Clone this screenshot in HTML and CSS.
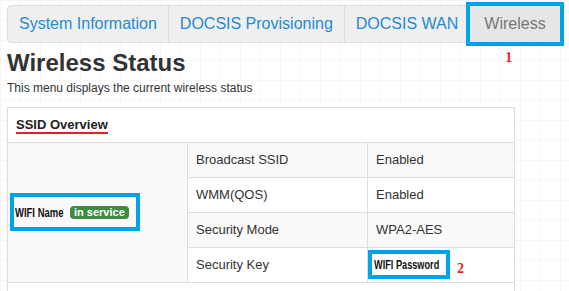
FILE: index.html
```html
<!DOCTYPE html>
<html>
<head>
<meta charset="utf-8">
<link rel="stylesheet" href="styles.css">
</head>
<body>
<nav class="tabs">
  <a class="tab">System Information</a>
  <a class="tab">DOCSIS Provisioning</a>
  <a class="tab">DOCSIS WAN</a>
  <a class="tab active">Wireless<span class="mark-box"></span><span class="mark-num one">1</span></a>
</nav>
<h1 class="title">Wireless Status</h1>
<p class="subtitle">This menu displays the current wireless status</p>
<table class="status">
  <colgroup>
    <col class="c1">
    <col class="c2">
    <col class="c3">
  </colgroup>
  <tr class="head">
    <td colspan="3"><span class="head-text">SSID Overview</span></td>
  </tr>
  <tr class="odd">
    <td rowspan="4" class="name-cell"><span class="name"><span class="narrow n-name"><span class="squeeze">WIFI Name</span></span><span class="badge">in service</span><span class="mark-box name-box"></span></span></td>
    <td>Broadcast SSID</td>
    <td>Enabled</td>
  </tr>
  <tr>
    <td>WMM(QOS)</td>
    <td>Enabled</td>
  </tr>
  <tr class="odd">
    <td>Security Mode</td>
    <td>WPA2-AES</td>
  </tr>
  <tr>
    <td>Security Key</td>
    <td class="key-cell"><span class="pass"><span class="narrow n-pass"><span class="squeeze">WIFI Password</span></span><span class="mark-box pass-box"></span><span class="mark-num two">2</span></span></td>
  </tr>
  <tr class="tail">
    <td colspan="3"></td>
  </tr>
</table>
</body>
</html>
```
FILE: styles.css
```css
html, body {
  margin: 0;
  padding: 0;
}
body {
  padding: 5px 7px 0;
  font-family: "Liberation Sans", Arial, sans-serif;
  color: #333;
  background-color: #fff;
  background-image:
    linear-gradient(to right, #f6f6f6 1px, transparent 1px),
    linear-gradient(to bottom, #f6f6f6 1px, transparent 1px);
  background-size: 20px 20px;
  overflow: hidden;
}
.tabs {
  display: flex;
  width: 552px;
  height: 36px;
  border: 1px solid #ddd;
  border-radius: 4px;
  background: #efefef;
}
.tab {
  display: flex;
  align-items: center;
  padding: 0 11px;
  font-size: 16px;
  color: #1f8ad6;
  border-right: 1px solid #dcdcdc;
  position: relative;
}
.tab.active {
  padding: 0 14px;
  color: #777;
  background: #e6e6e6;
  border-right: none;
}
.mark-box {
  position: absolute;
  border: 4px solid #00a2e8;
  inset: -4px;
  pointer-events: none;
}
.mark-num {
  position: absolute;
  font-family: "Liberation Serif", serif;
  font-weight: bold;
  font-size: 14px;
  line-height: 14px;
  color: #ed1c24;
}
.mark-num.one {
  left: 35px;
  top: 45px;
}
.title {
  margin: 7px 0 0;
  font-size: 24px;
  line-height: 26px;
  font-weight: bold;
  color: #333;
}
.subtitle {
  margin: 4px 0 0;
  font-size: 12px;
  line-height: 17px;
  color: #333;
}
.status {
  margin-top: 10px;
  border-collapse: collapse;
  table-layout: fixed;
  width: 507px;
  font-size: 13px;
  line-height: 18px;
}
.c1 { width: 180px; }
.c2 { width: 180px; }
.c3 { width: 147px; }
.status td {
  border: 1px solid #ddd;
  padding: 8px 8px;
  vertical-align: top;
  background: #fff;
}
.status tr.odd td { background: #f9f9f9; }
.status td.name-cell {
  background: #f9f9f9;
  vertical-align: middle;
}
.head-text {
  font-weight: bold;
  color: #222;
  border-bottom: 2px solid #ed1c24;
}
.name {
  position: relative;
  display: inline-flex;
  align-items: center;
  gap: 6px;
  margin-left: -1px;
  margin-top: -4px;
}
.narrow {
  display: inline-block;
  white-space: nowrap;
  font-weight: bold;
  font-size: 12px;
  color: #111;
}
.n-name { width: 49px; }
.n-pass { width: 65px; }
.squeeze {
  display: inline-block;
  transform: scaleX(0.79);
  transform-origin: left center;
}
.n-pass .squeeze { transform: scaleX(0.765); }
.badge {
  display: inline-block;
  background: #3e8b41;
  color: #fff;
  font-weight: bold;
  font-size: 11px;
  line-height: 13px;
  padding: 0 4px;
  border-radius: 4px;
}
.name-box {
  inset: -11px -11px -9px -5px;
}
.pass {
  position: relative;
  display: inline-block;
  margin-left: -2px;
}
.pass-box {
  inset: -6px -11px -5px -6px;
}
.mark-num.two {
  left: 83px;
  top: 6px;
}
.tail td {
  height: 20px;
  padding: 0;
}
```
